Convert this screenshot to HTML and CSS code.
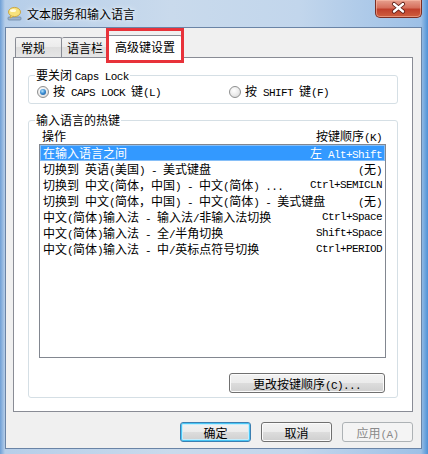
FILE: index.html
```html
<!DOCTYPE html>
<html lang="zh-CN">
<head>
  <meta charset="UTF-8" />
  <title>文本服务和输入语言</title>
  <link rel="stylesheet" href="styles.css">
</head>
<body>
  <div class="window">
    <div class="titlebar">
      <svg class="app-icon" width="16" height="16" viewBox="0 0 16 16">
        <rect x="1" y="11" width="13" height="3" rx="1" fill="#9fb4cb" stroke="#6f8aa8" stroke-width="0.8"/>
        <ellipse cx="7.5" cy="6" rx="6" ry="4.6" fill="#f7e27c" stroke="#c9a23a" stroke-width="0.9"/>
        <path d="M4 9.5 L3 12 L6.5 10.2" fill="#f7e27c" stroke="#c9a23a" stroke-width="0.8"/>
        <ellipse cx="6" cy="4.6" rx="3" ry="1.5" fill="#fffbe0"/>
      </svg>
      <span class="title">文本服务和输入语言</span>
    </div>
    <div class="close-btn">
      <svg width="47" height="18" viewBox="0 0 47 18">
        <path d="M19 5 L28 12.5 M28 5 L19 12.5" stroke="#5a1a12" stroke-width="4.2" stroke-linecap="round"/>
        <path d="M19 5 L28 12.5 M28 5 L19 12.5" stroke="#ffffff" stroke-width="2.4" stroke-linecap="round"/>
      </svg>
    </div>

    <div class="client">
      <div class="tabs">
        <div class="tab">常规</div>
        <div class="tab">语言栏</div>
        <div class="tab active">高级键设置</div>
      </div>

      <div class="panel">
        <div class="group caps-group">
          <div class="group-title">要关闭 <span class="m">Caps Lock</span></div>
          <div class="radio-row">
            <label class="radio-item first">
              <span class="radio checked"></span>
              <span>按<span class="m"> CAPS LOCK </span>键<span class="m">(L)</span></span>
            </label>
            <label class="radio-item">
              <span class="radio"></span>
              <span>按<span class="m"> SHIFT </span>键<span class="m">(F)</span></span>
            </label>
          </div>
        </div>

        <div class="group hotkey-group">
          <div class="group-title">输入语言的热键</div>
          <div class="list-head">
            <span>操作</span>
            <span>按键顺序<span class="m">(K)</span></span>
          </div>
          <div class="listbox">
            <div class="row selected">
              <span>在输入语言之间</span>
              <span>左<span class="m"> Alt+Shift</span></span>
            </div>
            <div class="row">
              <span>切换到<span class="m"> </span>英语<span class="m">(</span>美国<span class="m">) - </span>美式键盘</span>
              <span><span class="m">(</span>无<span class="m">)</span></span>
            </div>
            <div class="row">
              <span>切换到<span class="m"> </span>中文<span class="m">(</span>简体，中国<span class="m">) - </span>中文<span class="m">(</span>简体<span class="m">) ...</span></span>
              <span class="m">Ctrl+SEMICLN</span>
            </div>
            <div class="row">
              <span>切换到<span class="m"> </span>中文<span class="m">(</span>简体，中国<span class="m">) - </span>中文<span class="m">(</span>简体<span class="m">) - </span>美式键盘</span>
              <span><span class="m">(</span>无<span class="m">)</span></span>
            </div>
            <div class="row">
              <span>中文<span class="m">(</span>简体<span class="m">)</span>输入法<span class="m"> - </span>输入法<span class="m">/</span>非输入法切换</span>
              <span class="m">Ctrl+Space</span>
            </div>
            <div class="row">
              <span>中文<span class="m">(</span>简体<span class="m">)</span>输入法<span class="m"> - </span>全<span class="m">/</span>半角切换</span>
              <span class="m">Shift+Space</span>
            </div>
            <div class="row">
              <span>中文<span class="m">(</span>简体<span class="m">)</span>输入法<span class="m"> - </span>中<span class="m">/</span>英标点符号切换</span>
              <span class="m">Ctrl+PERIOD</span>
            </div>
          </div>
          <button class="btn change-btn">更改按键顺序<span class="m">(C)...</span></button>
        </div>
      </div>

      <div class="dialog-buttons">
        <button class="btn default">确定</button>
        <button class="btn">取消</button>
        <button class="btn" disabled>应用<span class="m">(A)</span></button>
      </div>
    </div>

    <!-- red highlight drawn over the active tab -->
    <div class="mark"></div>
  </div>
</body>
</html>
```

FILE: styles.css
```css
body {
  margin: 0;
  font-family: "Noto Sans CJK SC", sans-serif;
  font-size: 12px;
  color: #000;
  overflow: hidden;
}

.m {
  font-family: "Liberation Mono", "Noto Sans CJK SC", monospace;
  font-size: 11px;
  letter-spacing: -0.6px;
}

.window {
  position: relative;
  width: 428px;
  height: 454px;
  box-sizing: border-box;
  padding: 0 6px 5px 5px;
  display: flex;
  flex-direction: column;
  background: linear-gradient(to right, #6e9fd6 0, #b6cee9 5px, #c9daec 40%, #c2d6ec 70%, #9dc0e6 calc(100% - 7px), #4f92d6 100%);
}

.titlebar {
  height: 27px;
  flex-shrink: 0;
  display: flex;
  align-items: center;
  padding-left: 2px;
}

.app-icon {
  margin-top: 1px;
}

.title {
  margin-left: 4px;
  text-shadow: 0 0 6px #eef4fb, 0 0 3px #eef4fb;
}

.close-btn {
  position: absolute;
  top: 0;
  right: 6px;
  width: 47px;
  height: 18px;
  box-sizing: border-box;
  border: 1px solid #7a2e24;
  border-top: none;
  border-radius: 0 0 5px 5px;
  background: linear-gradient(#e7a08f 0, #d6705d 45%, #c0402c 55%, #cf5f3e 100%);
  box-shadow: inset 0 0 0 1px rgba(255, 200, 180, 0.5);
}

.close-btn svg {
  display: block;
  margin: -1px 0 0 -1px;
}

.client {
  flex: 1;
  border: 1px solid #6a84a6;
  background: #f0f0f0;
  display: flex;
  flex-direction: column;
}

.tabs {
  display: flex;
  align-items: flex-end;
  height: 22px;
  margin: 7px 0 0 9px;
  position: relative;
  z-index: 1;
}

.tab {
  height: 20px;
  box-sizing: border-box;
  padding: 0 0 0 5px;
  line-height: 19px;
  border: 1px solid #898c95;
  border-bottom: none;
  border-radius: 2px 2px 0 0;
  background: linear-gradient(#f3f3f3, #ebebeb 50%, #dedede 50%, #e6e6e6);
}

.tab:nth-child(1) {
  width: 47px;
}

.tab:nth-child(2) {
  width: 46px;
  border-left: none;
}

.tab.active {
  width: 76px;
  height: 23px;
  margin: 0 0 -1px -2px;
  padding-left: 8px;
  line-height: 21px;
  background: #fff;
}

.panel {
  margin-left: 7px;
  width: 400px;
  height: 355px;
  box-sizing: border-box;
  border: 1px solid #898c95;
  background: #fff;
  display: flex;
  flex-direction: column;
}

.group {
  margin: 0 14px;
  border: 1px solid #d5dfe5;
  border-radius: 3px;
  display: flex;
  flex-direction: column;
}

.group-title {
  margin: -8px 0 0 6px;
  padding: 0 1px;
  height: 14px;
  line-height: 14px;
  width: fit-content;
  background: #fff;
}

.caps-group {
  margin-top: 17px;
  padding-bottom: 4px;
}

.radio-row {
  display: flex;
  margin-top: 3px;
  padding-left: 8px;
  height: 14px;
  line-height: 14px;
}

.radio-item {
  display: flex;
  align-items: center;
  white-space: pre;
}

.radio-item.first {
  width: 192px;
}

.radio {
  width: 12px;
  height: 12px;
  box-sizing: border-box;
  margin-right: 4px;
  border: 1px solid #8e8f8f;
  border-radius: 50%;
  background: radial-gradient(circle at 40% 35%, #ffffff 0, #ececec 50%, #d2d2d2 100%);
  display: flex;
  align-items: center;
  justify-content: center;
}

.radio.checked::after {
  content: "";
  width: 6px;
  height: 6px;
  border-radius: 50%;
  background: radial-gradient(circle at 40% 35%, #b9e6ff 0, #3d8fd4 45%, #174a86 100%);
}

.hotkey-group {
  margin-top: 16px;
  padding-bottom: 4px;
}

.list-head {
  display: flex;
  justify-content: space-between;
  margin-top: 2px;
  padding: 0 15px 0 13px;
  height: 14px;
  line-height: 14px;
}

.listbox {
  margin: 1px 11px 0 10px;
  height: 214px;
  box-sizing: border-box;
  border: 1px solid #828790;
  background: #fff;
}

.row {
  display: flex;
  justify-content: space-between;
  height: 16px;
  line-height: 16px;
  padding: 0 3px;
  white-space: pre;
}

.row.selected {
  background: #3399ff;
  color: #fff;
  box-shadow: inset 0 0 0 1px #86bff8;
}

.btn {
  height: 20px;
  padding: 0;
  font-family: "Noto Sans CJK SC", sans-serif;
  font-size: 12px;
  color: #000;
  border: 1px solid #707070;
  border-radius: 3px;
  background: linear-gradient(#f2f2f2 0, #ebebeb 50%, #dddddd 50%, #cfcfcf 100%);
  box-shadow: inset 0 0 0 1px #fbfbfb;
}

.change-btn {
  align-self: flex-end;
  width: 156px;
  margin: 15px 12px 0 0;
}

.dialog-buttons {
  display: flex;
  justify-content: flex-end;
  gap: 10px;
  margin-top: 10px;
  padding-right: 8px;
}

.dialog-buttons .btn {
  width: 71px;
}

.btn.default {
  border-color: #3c7fb1;
  box-shadow: inset 0 0 0 1px #48c6f5, inset 0 0 0 2px #c5ecfc;
}

.btn:disabled {
  color: #8a8a8a;
  border-color: #adb2b5;
  background: #f4f4f4;
  box-shadow: none;
}

.mark {
  position: absolute;
  left: 106px;
  top: 28px;
  width: 78px;
  height: 35px;
  box-sizing: border-box;
  border: 3px solid #e8323a;
  z-index: 2;
}
```
